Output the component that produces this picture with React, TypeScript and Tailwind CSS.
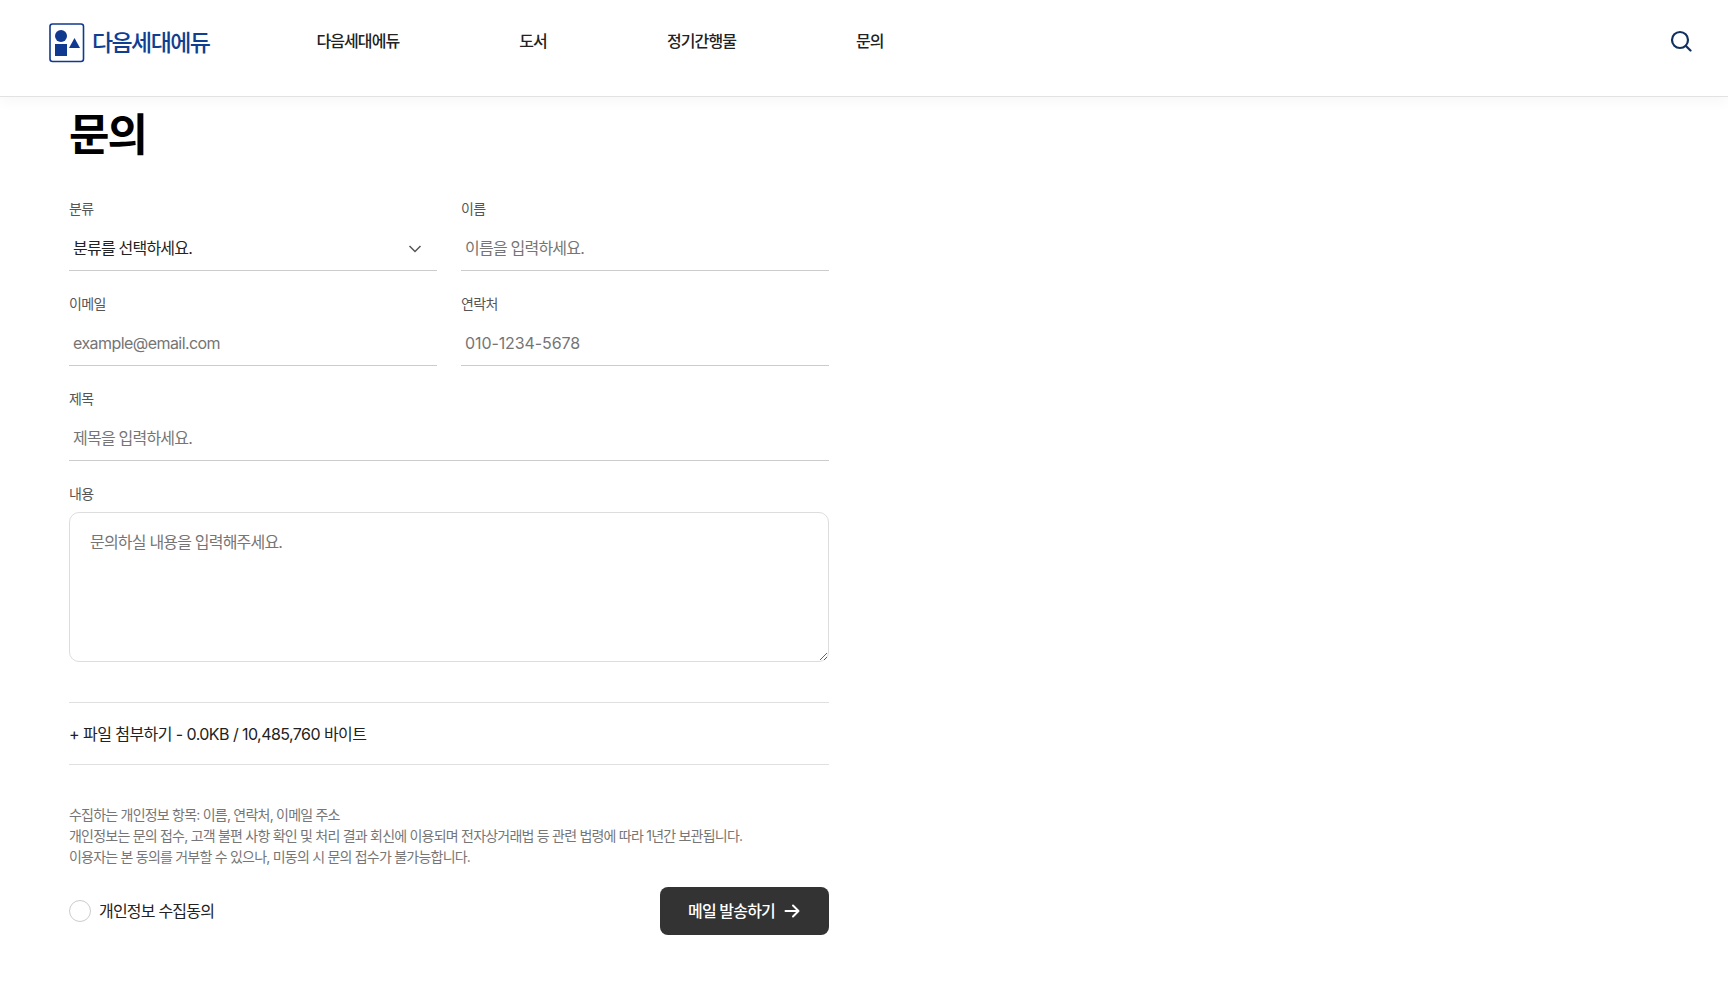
import React from "react";

const font = { fontFamily: '"Inter","Noto Sans CJK KR",sans-serif' };

function Label({ children }: { children: React.ReactNode }) {
  return <label className="block h-5 text-[14px] leading-5 tracking-[-0.6px] text-[#555]">{children}</label>;
}

function Field({ label, placeholder, className = "", tracking = "tracking-[-0.78px]" }: { label: string; placeholder: string; className?: string; tracking?: string }) {
  return (
    <div className={className}>
      <Label>{label}</Label>
      <input
        placeholder={placeholder}
        className={`mt-[7px] block h-[45px] w-full border-b border-[#ccc] px-1 text-[16px] text-[#222] outline-none placeholder:text-[#757575] ${tracking}`}
      />
    </div>
  );
}

export default function App() {
  return (
    <div style={font} className="min-h-[983px] bg-white text-[#111]">
      <header className="relative flex h-[97px] items-start border-b border-[#e2e2e2] pl-[48px] pr-[36px] shadow-[0_4px_14px_rgba(0,0,0,0.04)]">
        <div className="mt-[22px] flex items-center">
          <svg width="38" height="42" viewBox="0 0 38 42" fill="none">
            <rect x="2" y="2" width="33.5" height="37.5" rx="2.5" stroke="#0f3a8f" strokeWidth="1.6" />
            <circle cx="13" cy="14" r="6" fill="#0f3a8f" />
            <rect x="7" y="22" width="12" height="12" fill="#0f3a8f" />
            <path d="M26.5 16 L32 26 H21 Z" fill="#0f3a8f" />
          </svg>
          <span className="ml-[6px] text-[23px] leading-8 font-medium tracking-[-1.6px] text-[#103f92]">다음세대에듀</span>
        </div>
        <nav className="ml-[107px] mt-[30px] flex gap-[120px] text-[16px] leading-[22px] font-medium tracking-[-0.9px] text-[#222]">
          <a>다음세대에듀</a>
          <a>도서</a>
          <a>정기간행물</a>
          <a>문의</a>
        </nav>
        <svg className="ml-auto mt-[30px]" width="22" height="22" viewBox="0 0 22 22" fill="none" stroke="#12305f" strokeWidth="2.2" strokeLinecap="round">
          <circle cx="10" cy="10" r="8" />
          <path d="M16 16 L20.5 20.5" />
        </svg>
      </header>

      <main className="w-[760px] ml-[69px]">
        <h1 className="mt-[10px] text-[44px] leading-[56px] font-bold tracking-[-2px] text-black">문의</h1>

        <div className="mt-[36px] grid grid-cols-2 gap-x-6 gap-y-[23px]">
          <div>
            <Label>분류</Label>
            <div className="relative mt-[7px] h-[45px] border-b border-[#ccc]">
              <select className="h-full w-full appearance-none px-1 text-[16px] tracking-[-0.78px] text-[#222] outline-none">
                <option>분류를 선택하세요.</option>
              </select>
              <svg className="pointer-events-none absolute right-[15px] top-[16px]" width="14" height="14" viewBox="0 0 14 14" fill="none" stroke="#555" strokeWidth="1.5">
                <path d="M1.5 4 L7 9.5 L12.5 4" />
              </svg>
            </div>
          </div>
          <Field label="이름" placeholder="이름을 입력하세요." />
          <Field label="이메일" placeholder="example@email.com" tracking="tracking-[-0.56px]" />
          <Field label="연락처" placeholder="010-1234-5678" tracking="tracking-[-0.1px]" />
          <Field label="제목" placeholder="제목을 입력하세요." className="col-span-2" />
          <div className="col-span-2">
            <Label>내용</Label>
            <textarea
              placeholder="문의하실 내용을 입력해주세요."
              className="mt-[8px] block h-[150px] w-full rounded-[10px] border border-[#ddd] px-5 pt-[17px] pb-[18px] text-[16px] leading-6 tracking-[-0.8px] outline-none placeholder:text-[#757575]"
            />
          </div>
        </div>

        <div className="mt-10 flex h-[63px] items-center border-y border-[#e0e0e0] text-[16px] tracking-[-0.56px] text-[#222]">
          + 파일 첨부하기 - 0.0KB / 10,485,760 바이트
        </div>

        <div className="mt-[39px] text-[14px] leading-[21px] tracking-[-0.78px] text-[#767676]">
          <p>수집하는 개인정보 항목: 이름, 연락처, 이메일 주소</p>
          <p>개인정보는 문의 접수, 고객 불편 사항 확인 및 처리 결과 회신에 이용되며 전자상거래법 등 관련 법령에 따라 1년간 보관됩니다.</p>
          <p>이용자는 본 동의를 거부할 수 있으나, 미동의 시 문의 접수가 불가능합니다.</p>
        </div>

        <div className="mt-[20px] flex items-center justify-between">
          <label className="-mt-[1px] flex items-center gap-2 text-[16px] tracking-[-0.8px] text-[#222]">
            <span className="block h-[22px] w-[22px] rounded-full border border-[#ccc]" />
            개인정보 수집동의
          </label>
          <button className="flex h-12 w-[169px] items-center justify-center gap-2 rounded-lg bg-[#333] text-[16px] font-medium tracking-[-0.8px] text-white">
            메일 발송하기
            <svg width="18" height="18" viewBox="0 0 18 18" fill="none" stroke="#fff" strokeWidth="2" strokeLinecap="round" strokeLinejoin="round">
              <path d="M2.5 9 H15.5 M10 3.5 L15.5 9 L10 14.5" />
            </svg>
          </button>
        </div>
      </main>
    </div>
  );
}
